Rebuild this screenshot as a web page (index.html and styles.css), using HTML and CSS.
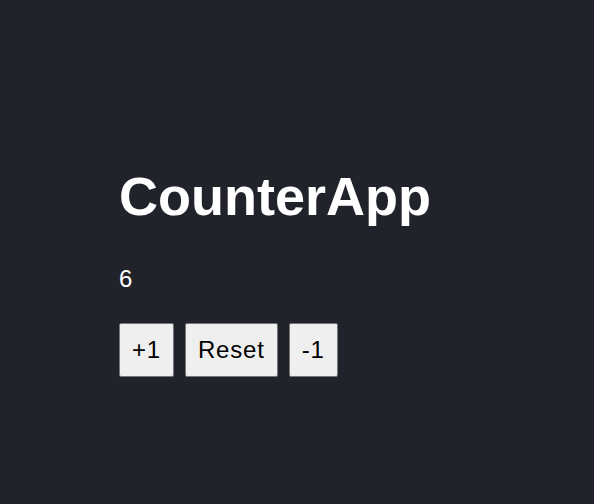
FILE: index.html
```html
<!DOCTYPE html>
<html>
<head>
<meta charset="utf-8">
<link rel="stylesheet" href="styles.css">
</head>
<body>
<div class="app">
  <h1 class="title">CounterApp</h1>
  <p class="count">6</p>
  <div class="buttons">
    <button class="btn">+1</button>
    <button class="btn">Reset</button>
    <button class="btn">-1</button>
  </div>
</div>
</body>
</html>
```
FILE: styles.css
```css
html, body {
  margin: 0;
  padding: 0;
  height: 100%;
  background: #20232a;
}
body {
  font-family: "Liberation Sans", Arial, sans-serif;
  color: #ffffff;
}
.app {
  padding: 165px 0 0 119px;
  display: flex;
  flex-direction: column;
  align-items: flex-start;
}
.title {
  margin: 0;
  font-size: 54px;
  font-weight: bold;
  line-height: 62px;
}
.count {
  margin: 38px 0 0 0;
  font-size: 24px;
  line-height: 28px;
}
.buttons {
  margin-top: 30px;
  display: flex;
  gap: 11px;
}
.btn {
  box-sizing: border-box;
  height: 54px;
  font-family: "Liberation Sans", Arial, sans-serif;
  font-size: 24px;
  line-height: 28px;
  letter-spacing: 0.8px;
  padding: 12px 12px;
  background: #efefef;
  color: #000;
  border: 1px solid #767676;
  border-radius: 2px;
}
```
